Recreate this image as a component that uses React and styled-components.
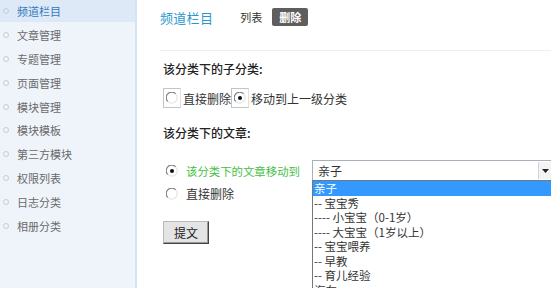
import styled, { createGlobalStyle } from "styled-components"

const Global = createGlobalStyle`
    html, body {
        margin: 0;
        padding: 0;
        background: #fff;
        overflow: hidden;
    }
    body {
        font-family: "Noto Sans CJK SC", "Noto Sans", sans-serif;
        color: #333;
    }
`

const menu = ["频道栏目", "文章管理", "专题管理", "页面管理", "模块管理", "模块模板", "第三方模块", "权限列表", "日志分类", "相册分类"]

const options = [
    "亲子",
    "-- 宝宝秀",
    "---- 小宝宝（0-1岁）",
    "---- 大宝宝（1岁以上）",
    "-- 宝宝喂养",
    "-- 早教",
    "-- 育儿经验",
    "汽车",
]

const Radio = ({ checked }) => (
    <svg width="12" height="12" viewBox="0 0 12 12">
        <circle cx="6" cy="6" r="5.5" fill="#fff" />
        <path d="M1.8 9.6 A5 5 0 0 1 9.6 1.8" stroke="#808080" strokeWidth="1.2" fill="none" />
        <path d="M9.6 1.8 A5 5 0 0 1 1.8 9.6" stroke="#e4e4e4" strokeWidth="1.2" fill="none" />
        {checked && <circle cx="6" cy="6" r="2" fill="#111" />}
    </svg>
)

const App = () => {
    return (
        <Page>
            <Global />
            <Sidebar>
                {menu.map((m, i) => (
                    <MenuItem key={m} active={i === 0}>
                        <Dot />
                        {m}
                    </MenuItem>
                ))}
            </Sidebar>

            <Main>
                <Header>
                    <h2>频道栏目</h2>
                    <span className="tab">列表</span>
                    <span className="del">删除</span>
                </Header>

                <Label>该分类下的子分类:</Label>
                <BoxRow>
                    <RadioBox><Radio /></RadioBox>
                    <span>直接删除</span>
                    <RadioBox><Radio checked /></RadioBox>
                    <span>移动到上一级分类</span>
                </BoxRow>

                <Label className="second">该分类下的文章:</Label>
                <Choice className="first">
                    <Radio checked />
                    <span className="green">该分类下的文章移动到</span>
                    <Select>
                        <span>亲子</span>
                        <Arrow>
                            <svg width="7" height="4" viewBox="0 0 7 4"><path d="M0 0h7L3.5 4z" fill="#222" /></svg>
                        </Arrow>
                        <Dropdown>
                            {options.map((o, i) => (
                                <Option key={o} selected={i === 0}>{o}</Option>
                            ))}
                        </Dropdown>
                    </Select>
                </Choice>
                <Choice>
                    <Radio />
                    <span>直接删除</span>
                </Choice>

                <Submit>提文</Submit>
            </Main>
        </Page>
    )
}

export default App;

const Page = styled.div`
    display: flex;
    width: 551px;
    height: 288px;
    overflow: hidden;
`

const Sidebar = styled.div`
    width: 135px;
    flex-shrink: 0;
    background: #eef4fa;
    border-right: 2px solid #d3e4f4;
`

const MenuItem = styled.div`
    display: flex;
    align-items: center;
    height: 22px;
    margin-bottom: 1.9px;
    padding-left: 3px;
    font-size: 11px;
    color: ${p => p.active ? "#3478c0" : "#6a6a6a"};
    background: ${p => p.active ? "#dde9f6" : "transparent"};
`

const Dot = styled.span`
    width: 4px;
    height: 4px;
    border: 1px solid #c8ccd4;
    border-radius: 50%;
    margin-right: 8px;
`

const Main = styled.div`
    flex: 1;
    padding-left: 23px;
    font-size: 12px;
`

const Header = styled.div`
    display: flex;
    align-items: center;
    height: 34px;
    padding-bottom: 16px;
    border-bottom: 1px solid #f0f0f0;

    h2 {
        margin: 0;
        font-size: 13px;
        font-weight: normal;
        color: #2a98d0;
        letter-spacing: 0.3px;
    }

    .tab {
        margin-left: 27px;
        font-size: 11px;
        color: #333;
    }

    .del {
        margin-left: 10px;
        width: 36px;
        height: 18px;
        line-height: 18px;
        text-align: center;
        border-radius: 2px;
        background: #5e5e5e;
        color: #fff;
        font-size: 11px;
        font-weight: bold;
    }
`

const Label = styled.div`
    margin: 10px 0 0 3px;
    height: 16px;
    line-height: 16px;
    font-size: 12px;
    font-weight: 500;
    color: #222;

    &.second {
        margin-top: 17px;
    }
`

const BoxRow = styled.div`
    display: flex;
    align-items: center;
    margin: 11px 0 0 3px;
    height: 20px;
    font-size: 12px;
    color: #333;
`

const RadioBox = styled.span`
    display: flex;
    align-items: center;
    justify-content: center;
    width: 16px;
    height: 18px;
    border: 1px solid #c4c4c4;
    border-right-color: #e0e0e0;
    margin-right: 2px;
`

const Choice = styled.div`
    display: flex;
    align-items: center;
    gap: 8px;
    margin: 6px 0 0 6px;
    height: 17px;
    font-size: 12px;
    color: #333;
    white-space: nowrap;

    &.first {
        margin-top: 21px;
    }

    .green {
        color: #45c045;
        font-size: 11.4px;
        width: 118px;
    }
`

const Select = styled.div`
    position: relative;
    display: flex;
    align-items: center;
    width: 238px;
    height: 19px;
    border: 1px solid #a8b1bb;
    background: #fff;
    font-size: 12px;
    color: #333;

    span {
        padding-left: 5px;
        flex: 1;
    }
`

const Arrow = styled.div`
    display: flex;
    align-items: center;
    justify-content: center;
    width: 12px;
    height: 17px;
    border-left: 1px solid #d0d4d8;
    background: #f4f4f4;
`

const Dropdown = styled.div`
    position: absolute;
    top: 100%;
    left: -1px;
    width: 250px;
    background: #fff;
    border: 1px solid #777;
    z-index: 2;
`

const Option = styled.div`
    height: 14.5px;
    line-height: 14.5px;
    padding-left: 1px;
    font-size: 11.5px;
    color: ${p => p.selected ? "#fff" : "#333"};
    background: ${p => p.selected ? "#3399ff" : "transparent"};
`

const Submit = styled.button`
    display: block;
    margin: 19px 0 0 3px;
    width: 46px;
    height: 23px;
    padding: 0;
    font-family: inherit;
    font-size: 12px;
    color: #222;
    background: #e4e4e4;
    border: 1px solid #444;
    border-top-color: #bbb;
    border-left-color: #bbb;
    box-shadow: inset -1px -1px 0 #999;
`
